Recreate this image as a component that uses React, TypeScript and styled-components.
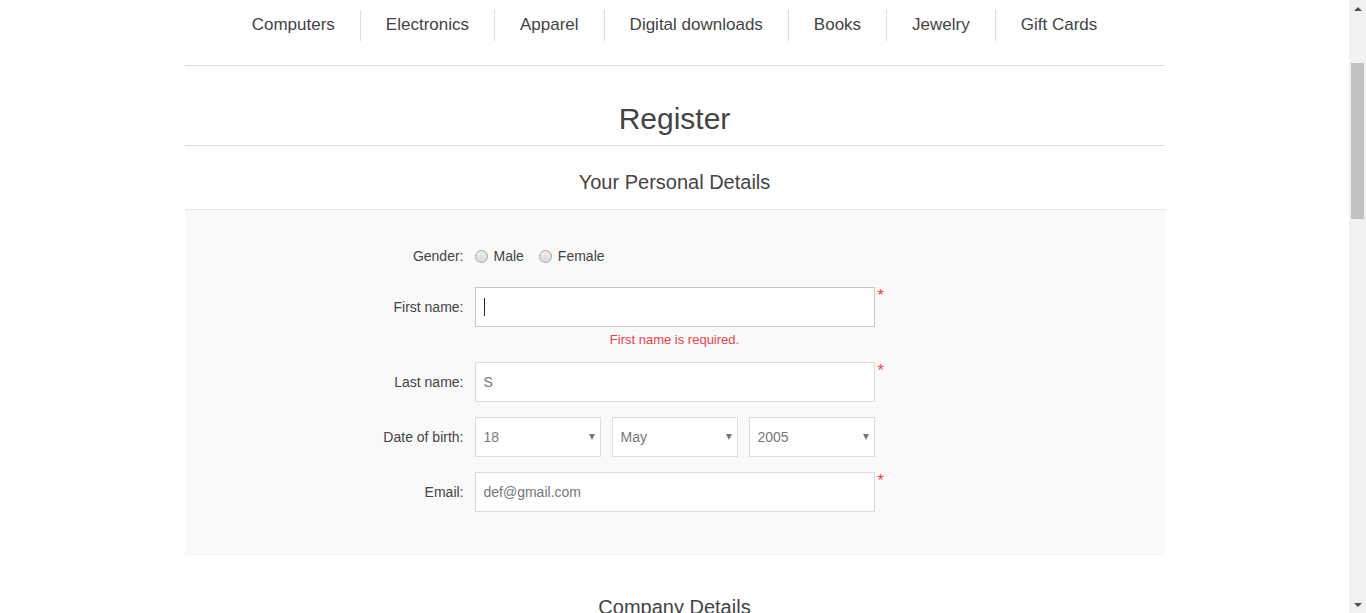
import React from 'react';
import styled, { createGlobalStyle } from 'styled-components';

const GlobalStyle = createGlobalStyle`
  html, body {
    margin: 0;
    padding: 0;
    background: #fff;
    overflow: hidden;
  }
  body {
    font-family: "Liberation Sans", Arial, sans-serif;
    color: #444;
  }
  * { box-sizing: border-box; }
`;

const categories = ['Computers', 'Electronics', 'Apparel', 'Digital downloads', 'Books', 'Jewelry', 'Gift Cards'];
const days = Array.from({ length: 31 }, (_, i) => String(i + 1));
const months = ['January', 'February', 'March', 'April', 'May', 'June', 'July', 'August', 'September', 'October', 'November', 'December'];
const years = Array.from({ length: 30 }, (_, i) => String(1990 + i));

const App = () => {
    return (
        <>
            <GlobalStyle />
            <S.Window>
                <S.Main>
                    <S.Page>
                        <S.Menu>
                            {categories.map((c, i) => (
                                <S.MenuItem key={c} first={i === 0}>{c}</S.MenuItem>
                            ))}
                        </S.Menu>

                        <S.PageTitle>Register</S.PageTitle>

                        <S.Fieldset>
                            <S.SectionTitle>Your Personal Details</S.SectionTitle>
                            <S.FormFields>
                                <S.Row>
                                    <S.Label>Gender:</S.Label>
                                    <S.Gender>
                                        <S.RadioLabel><S.Radio type="radio" name="gender" />Male</S.RadioLabel>
                                        <S.RadioLabel><S.Radio type="radio" name="gender" />Female</S.RadioLabel>
                                    </S.Gender>
                                </S.Row>
                                <S.Row>
                                    <S.Label>First name:</S.Label>
                                    <S.Field>
                                        <S.TextInput type="text" active defaultValue="" />
                                        <S.Caret />
                                        <S.Required>*</S.Required>
                                    </S.Field>
                                    <S.Error>First name is required.</S.Error>
                                </S.Row>
                                <S.Row>
                                    <S.Label>Last name:</S.Label>
                                    <S.Field>
                                        <S.TextInput type="text" defaultValue="S" />
                                        <S.Required>*</S.Required>
                                    </S.Field>
                                </S.Row>
                                <S.Row>
                                    <S.Label>Date of birth:</S.Label>
                                    <S.DateGroup>
                                        <S.SelectWrap>
                                            <S.Select defaultValue="18">
                                                {days.map(d => <option key={d}>{d}</option>)}
                                            </S.Select>
                                        </S.SelectWrap>
                                        <S.SelectWrap>
                                            <S.Select defaultValue="May">
                                                {months.map(m => <option key={m}>{m}</option>)}
                                            </S.Select>
                                        </S.SelectWrap>
                                        <S.SelectWrap>
                                            <S.Select defaultValue="2005">
                                                {years.map(y => <option key={y}>{y}</option>)}
                                            </S.Select>
                                        </S.SelectWrap>
                                    </S.DateGroup>
                                </S.Row>
                                <S.Row>
                                    <S.Label>Email:</S.Label>
                                    <S.Field>
                                        <S.TextInput type="text" defaultValue="def@gmail.com" />
                                        <S.Required>*</S.Required>
                                    </S.Field>
                                </S.Row>
                            </S.FormFields>
                        </S.Fieldset>

                        <S.Fieldset>
                            <S.SectionTitle>Company Details</S.SectionTitle>
                        </S.Fieldset>
                    </S.Page>
                </S.Main>

                <S.Scrollbar>
                    <S.ScrollButton up />
                    <S.Track>
                        <S.Thumb />
                    </S.Track>
                    <S.ScrollButton />
                </S.Scrollbar>
            </S.Window>
        </>
    );
}

const S = {
    Window: styled.div`
        display: grid;
        grid-template-columns: 1fr 17px;
        height: 100vh;
        overflow: hidden;
    `,
    Main: styled.div`
        overflow: hidden;
    `,
    Scrollbar: styled.div`
        display: flex;
        flex-direction: column;
        background: #f1f1f1;
    `,
    ScrollButton: styled.div<{ up?: boolean }>`
        height: 17px;
        display: flex;
        align-items: center;
        justify-content: center;
        &::before {
            content: '';
            border-left: 4px solid transparent;
            border-right: 4px solid transparent;
            ${p => (p.up ? 'border-bottom: 4px solid #505050;' : 'border-top: 4px solid #505050;')}
        }
    `,
    Track: styled.div`
        flex: 1;
        padding: 46px 2px 0;
    `,
    Thumb: styled.div`
        height: 156px;
        background: #c1c1c1;
    `,
    Page: styled.div`
        width: 980px;
        margin: 0 auto;
    `,
    Menu: styled.ul`
        display: flex;
        justify-content: center;
        list-style: none;
        margin: 0;
        padding: 10px 0 24px;
        border-bottom: 1px solid #ddd;
    `,
    MenuItem: styled.li<{ first?: boolean }>`
        height: 31px;
        line-height: 30px;
        padding: 0 25px;
        font-size: 17px;
        color: #444;
        border-left: ${p => (p.first ? 'none' : '1px solid #ddd')};
    `,
    PageTitle: styled.h1`
        margin: 0 0 24px;
        padding: 35px 10px 8px;
        border-bottom: 1px solid #ddd;
        font-size: 30px;
        line-height: 36px;
        font-weight: normal;
        text-align: center;
        color: #444;
    `,
    Fieldset: styled.div`
        margin-bottom: 39px;
    `,
    SectionTitle: styled.div`
        padding: 0 10px 15px;
        font-size: 20px;
        line-height: 24px;
        text-align: center;
        color: #444;
    `,
    FormFields: styled.div`
        border-top: 1px solid #e6e6e6;
        background: #f9f9f9;
        padding: 30px 15px 29px;
    `,
    Row: styled.div`
        display: grid;
        grid-template-columns: 264px 400px 1fr;
        column-gap: 11px;
        align-items: center;
        margin-bottom: 15px;
    `,
    Label: styled.label`
        text-align: right;
        font-size: 14px;
        color: #444;
    `,
    Gender: styled.div`
        display: flex;
        align-items: center;
        gap: 15px;
        height: 32px;
    `,
    RadioLabel: styled.label`
        display: flex;
        align-items: center;
        font-size: 14px;
        color: #444;
    `,
    Radio: styled.input`
        appearance: none;
        width: 13px;
        height: 13px;
        margin: 0 6px 0 0;
        border-radius: 50%;
        border: 1px solid #a6a6a6;
        background: linear-gradient(#f0f0f0, #d8d8d8);
    `,
    Field: styled.div`
        position: relative;
        display: flex;
        align-items: center;
    `,
    TextInput: styled.input<{ active?: boolean }>`
        width: 400px;
        height: 40px;
        border: 1px solid ${p => (p.active ? '#c8c8c8' : '#ddd')};
        background: #fff;
        padding: 0 8px;
        font-family: "Liberation Sans", Arial, sans-serif;
        font-size: 14px;
        color: #777;
        outline: none;
    `,
    Caret: styled.span`
        position: absolute;
        left: 9px;
        top: 11px;
        width: 1px;
        height: 18px;
        background: #222;
    `,
    Required: styled.span`
        position: absolute;
        left: 403px;
        top: 0;
        font-size: 16px;
        line-height: 18px;
        color: #e4434b;
    `,
    Error: styled.div`
        grid-column: 1 / 4;
        margin-top: 5px;
        text-align: center;
        font-size: 13px;
        line-height: 15px;
        color: #e4434b;
    `,
    DateGroup: styled.div`
        display: flex;
        gap: 11px;
    `,
    SelectWrap: styled.div`
        position: relative;
        width: 126px;
        &::after {
            content: '';
            position: absolute;
            right: 6px;
            top: 17px;
            border-left: 3.5px solid transparent;
            border-right: 3.5px solid transparent;
            border-top: 6px solid #777;
            pointer-events: none;
        }
    `,
    Select: styled.select`
        appearance: none;
        width: 100%;
        height: 40px;
        border: 1px solid #ddd;
        border-radius: 0;
        background: #fff;
        padding: 0 8px;
        font-family: "Liberation Sans", Arial, sans-serif;
        font-size: 14px;
        color: #777;
        outline: none;
    `,
};

export default App;
